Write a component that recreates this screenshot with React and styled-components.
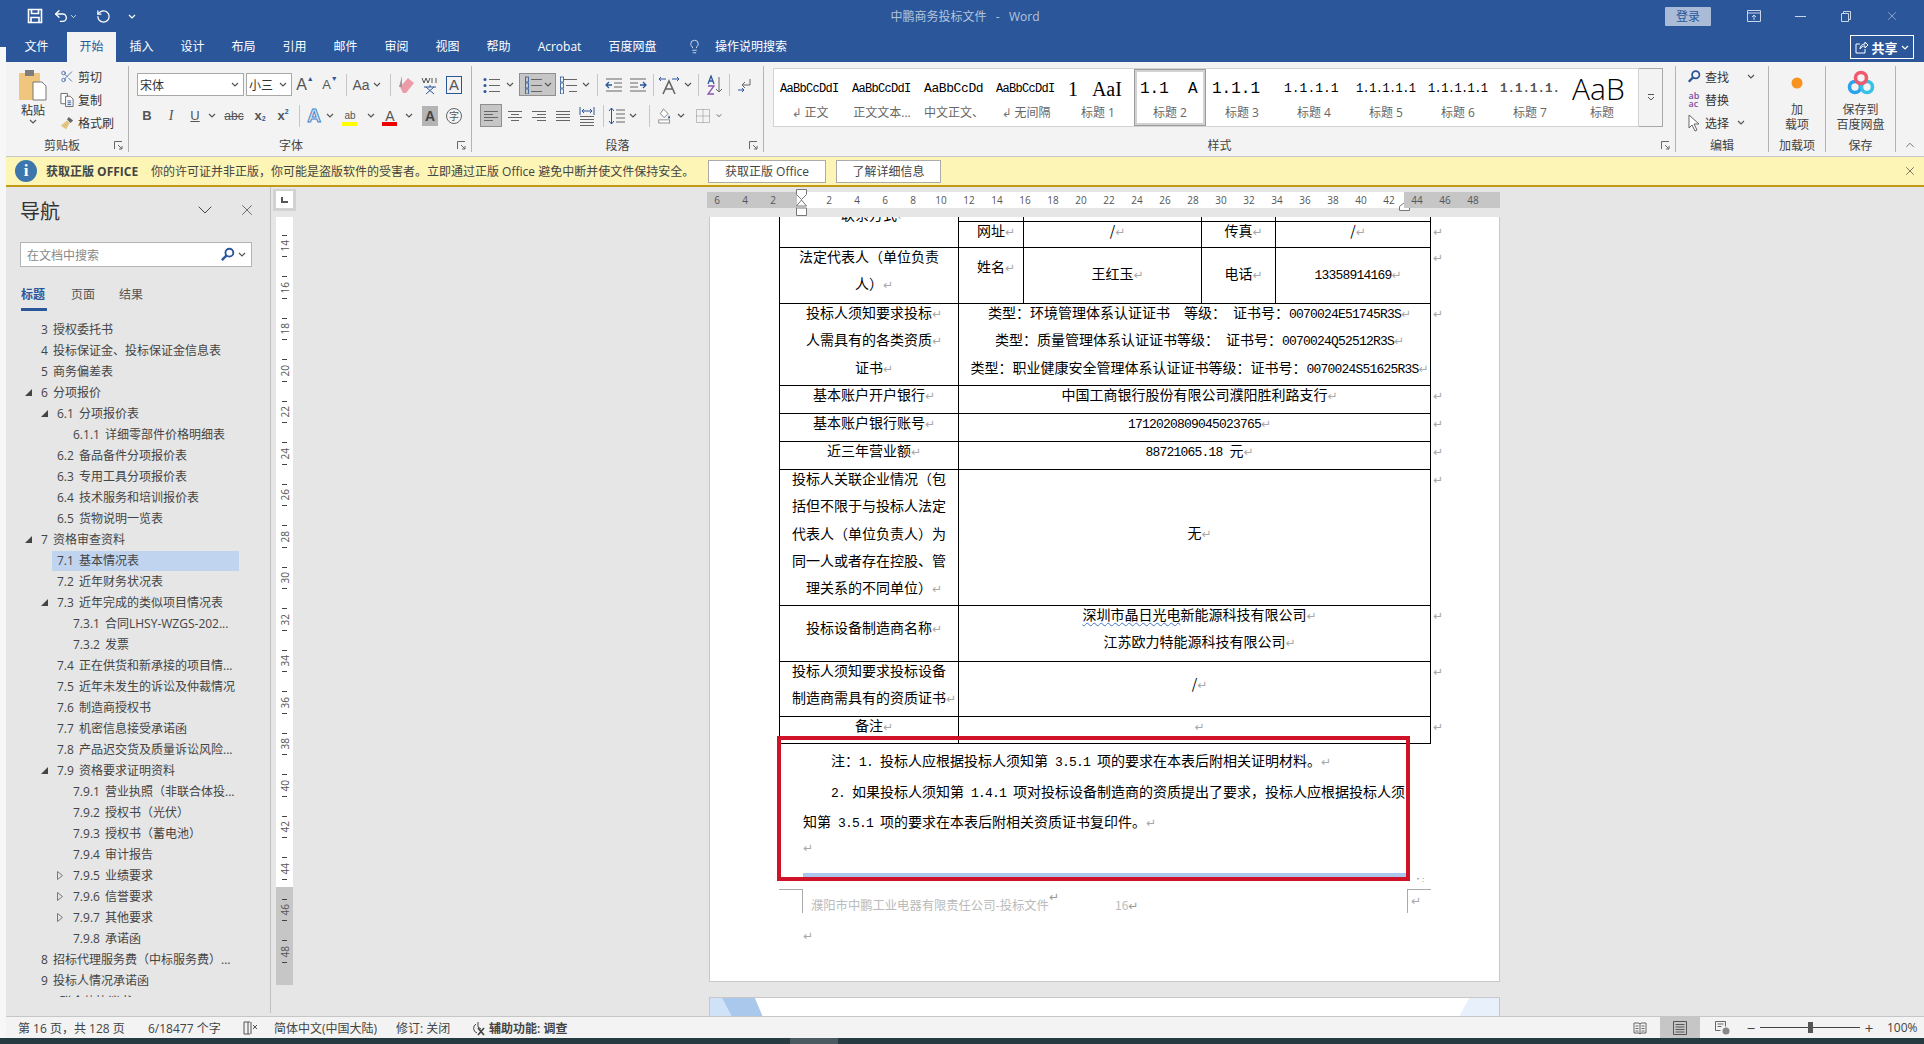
import React from "react";
import styled, { createGlobalStyle } from "styled-components";
import { Scissors, Undo2, RotateCcw, Lightbulb, X, ChevronDown, ChevronUp } from "lucide-react";

const UI_FONT = `"Open Sans", "Noto Sans CJK SC", sans-serif`;
const DOC_FONT = `"Noto Sans CJK SC", sans-serif`;
const BLUE = "#2b579a";

const Global = createGlobalStyle`
  html, body { margin: 0; padding: 0; background: #f7f7f7; overflow: hidden; }
  * { box-sizing: border-box; }
`;

const Screen = styled.div`
  width: 1924px;
  height: 1044px;
  display: flex;
  flex-direction: column;
  font-family: ${UI_FONT};
  font-size: 12px;
  color: #444;
  overflow: hidden;
`;
const Desktop = styled.div`
  flex: 1;
  display: flex;
  min-height: 0;
`;
const Strip = styled.div`
  width: 6px;
  background: linear-gradient(${BLUE} 47px, #f7f7f7 47px);
`;
const Win = styled.div`
  flex: 1;
  display: flex;
  flex-direction: column;
  min-width: 0;
`;

/* title bar */
const TitleRow = styled.div`
  height: 32px;
  background: ${BLUE};
  display: grid;
  grid-template-columns: 1fr auto 1fr;
  align-items: center;
  color: #fff;
`;
const Quick = styled.div`
  display: flex;
  align-items: center;
  padding-left: 20px;
`;
const QuickBtn = styled.div`
  width: ${(p) => p.$w}px;
  display: flex;
  justify-content: center;
  align-items: center;
`;
const TitleText = styled.div`
  color: #b4c4dc;
  font-size: 12px;
  white-space: pre;
`;
const WinControls = styled.div`
  display: flex;
  align-items: center;
  justify-content: flex-end;
  padding-right: 9px;
`;
const Login = styled.div`
  width: 46px;
  height: 19px;
  margin-right: 20px;
  background: #a9bbd6;
  color: ${BLUE};
  border-radius: 1px;
  display: flex;
  align-items: center;
  justify-content: center;
`;
const WinBtn = styled.div`
  width: 46px;
  display: flex;
  justify-content: center;
  align-items: center;
`;
const TabRow = styled.div`
  height: 30px;
  background: ${BLUE};
  display: flex;
  align-items: stretch;
`;
const Tab = styled.div`
  flex: none;
  width: ${(p) => (p.$w ? `${p.$w}px` : "auto")};
  padding: 0 13.5px 2px;
  display: flex;
  align-items: center;
  justify-content: center;
  white-space: nowrap;
  color: ${(p) => (p.$active ? BLUE : "#fff")};
  background: ${(p) => (p.$active ? "#f3f3f3" : "transparent")};
`;
const TellMe = styled.div`
  display: flex;
  align-items: center;
  gap: 13px;
  margin-left: 17px;
  padding-bottom: 2px;
  color: #fff;
`;
const Share = styled.div`
  margin: 3px 10px 3px auto;
  width: 64px;
  border: 1px solid #fff;
  color: #fff;
  font-weight: 700;
  font-size: 13px;
  display: flex;
  align-items: center;
  justify-content: center;
  gap: 3px;
`;

/* ribbon */
const Ribbon = styled.div`
  height: 95px;
  background: #f3f3f3;
  border-bottom: 1px solid #c6c6c6;
  display: flex;
  padding-top: 4px;
`;
const Group = styled.div`
  flex: none;
  width: ${(p) => p.$w}px;
  height: 86px;
  border-right: 1px solid #b4b4b4;
  display: flex;
  flex-direction: column;
`;
const GroupBody = styled.div`
  height: 72px;
  display: flex;
  padding: ${(p) => p.$pad || "0"};
`;
const ToolStack = styled.div`
  display: flex;
  flex-direction: column;
  gap: 8px;
  padding: 7px 0 0 ${(p) => p.$left}px;
`;
const LabelRow = styled.div`
  height: 14px;
  line-height: 16px;
  display: grid;
  grid-template-columns: 1fr auto 1fr;
  color: #444;
`;
const LabelText = styled.span`
  margin-right: ${(p) => p.$shift || 0}px;
`;
const Launcher = styled.svg`
  justify-self: end;
  margin: 3px 5px 0 0;
`;
const ToolRow = styled.div`
  display: flex;
  align-items: center;
  height: 23px;
`;
const Tool = styled.div`
  flex: none;
  width: ${(p) => p.$w}px;
  height: 23px;
  display: flex;
  align-items: center;
  justify-content: center;
  position: relative;
  white-space: nowrap;
  color: ${(p) => p.$color || "#555"};
  font-family: ${(p) => p.$serif ? `"Liberation Serif", serif` : `"Liberation Sans", sans-serif`};
  font-size: ${(p) => p.$size || 13}px;
  font-weight: ${(p) => (p.$bold ? 700 : 400)};
  font-style: ${(p) => (p.$italic ? "italic" : "normal")};
  text-decoration: ${(p) => p.$deco || "none"};
  background: ${(p) => (p.$on ? "#c6c6c6" : "transparent")};
  border: ${(p) => (p.$on ? "1px solid #8f8f8f" : "none")};
`;
const Sep = styled.div`
  flex: none;
  width: ${(p) => p.$w}px;
  height: 22px;
  display: flex;
  justify-content: center;
  &::after {
    content: "";
    width: 1px;
    background: #c6c6c6;
  }
`;
const Combo = styled.div`
  flex: none;
  width: ${(p) => p.$w}px;
  height: 23px;
  margin-right: ${(p) => p.$mr || 0}px;
  border: 1px solid #a8a8a8;
  background: #fff;
  padding: 0 4px 0 2px;
  display: flex;
  align-items: center;
  justify-content: space-between;
  color: #333;
  font-family: ${DOC_FONT};
`;
const ColorBar = styled.span`
  position: absolute;
  left: ${(p) => p.$left}px;
  bottom: 1px;
  width: 15px;
  height: 4px;
  background: ${(p) => p.$color};
`;
const Sup = styled.span`
  font-size: 7px;
  position: relative;
  top: ${(p) => p.$top}px;
  color: ${(p) => p.$color || "#555"};
`;
const PasteCol = styled.div`
  width: 54px;
  padding-top: 4px;
  display: flex;
  flex-direction: column;
  align-items: center;
  color: #333;
`;
const PasteLabel = styled.div`
  margin-top: 2px;
  line-height: 16px;
`;
const SideList = styled.div`
  display: flex;
  flex-direction: column;
  margin-top: -1px;
`;
const SideItem = styled.div`
  height: 23px;
  display: flex;
  align-items: center;
  gap: 4px;
  color: #333;
`;
const SideIcon = styled.div`
  width: 14px;
  display: flex;
  justify-content: center;
`;
const BigCol = styled.div`
  flex: 1;
  display: flex;
  flex-direction: column;
  align-items: center;
  text-align: center;
  line-height: 15px;
  color: #444;
`;
const BigIcon = styled.div`
  height: 34px;
  margin-bottom: 2px;
  display: flex;
  align-items: center;
  justify-content: center;
`;
const Gallery = styled.div`
  display: flex;
  height: 59px;
  border: 1px solid #d2d2d2;
  background: #fff;
`;
const StyleItem = styled.div`
  flex: none;
  width: 72px;
  height: 57px;
  box-shadow: ${(p) => (p.$on ? "inset 0 0 0 1px #9c9c9c, inset 0 0 0 3px #d2d2d2" : "none")};
`;
const StyleSample = styled.div`
  width: 60px;
  height: 32px;
  margin: 4px auto 0;
  overflow: hidden;
  white-space: pre;
  line-height: 32px;
  color: ${(p) => p.$color || "#000"};
  font-family: ${(p) => p.$font};
  font-size: ${(p) => p.$size}px;
  font-weight: ${(p) => p.$weight || 400};
  letter-spacing: ${(p) => p.$track || 0}px;
`;
const StyleName = styled.div`
  height: 16px;
  line-height: 16px;
  text-align: center;
  color: #666;
  white-space: nowrap;
`;
const GalleryScroll = styled.div`
  width: 24px;
  height: 59px;
  border: 1px solid #a8a8a8;
  border-left: none;
  display: flex;
  align-items: center;
  justify-content: center;
  background: #f3f3f3;
`;
const Collapse = styled.div`
  flex: 1;
  display: flex;
  align-items: flex-end;
  justify-content: center;
  height: 86px;
`;

/* licence warning */
const Warn = styled.div`
  height: 30px;
  background: #fcf5b6;
  border-bottom: 2px solid #bf9a17;
  display: flex;
  align-items: center;
  padding-left: 9px;
  color: #444;
  flex: none;
`;
const InfoDot = styled.div`
  width: 22px;
  height: 22px;
  border-radius: 50%;
  background: #3c76ad;
  color: #fff;
  font-family: "Liberation Serif", serif;
  font-weight: 700;
  font-size: 17px;
  display: flex;
  align-items: center;
  justify-content: center;
  margin-right: 9px;
`;
const WarnTitle = styled.b`
  width: 105px;
  flex: none;
  font-weight: 700;
`;
const WarnText = styled.div`
  width: 557px;
  flex: none;
  white-space: nowrap;
`;
const WarnBtn = styled.div`
  flex: none;
  width: ${(p) => p.$w}px;
  height: 23px;
  margin-right: 10px;
  background: #fff;
  border: 1px solid #ababab;
  display: flex;
  align-items: center;
  justify-content: center;
  color: #444;
`;
const WarnClose = styled.div`
  margin-left: auto;
  margin-right: 7px;
  display: flex;
  color: #444;
`;

/* main area */
const Main = styled.div`
  flex: 1;
  min-height: 0;
  display: flex;
  background: #e6e6e6;
`;
const Nav = styled.div`
  flex: none;
  width: 265px;
  height: 826px;
  border-right: 1px solid #c0c0c0;
  display: flex;
  flex-direction: column;
`;
const NavHead = styled.div`
  display: flex;
  align-items: center;
  height: 40px;
  padding: 6px 0 0 14px;
  color: #444;
`;
const NavTitle = styled.div`
  flex: 1;
  font-family: ${DOC_FONT};
  font-size: 20px;
  color: #333;
`;
const NavIcon = styled.div`
  width: 42px;
  display: flex;
  justify-content: center;
  color: #444;
  &:last-child {
    margin-right: 2px;
  }
`;
const NavSearch = styled.div`
  margin: 15px 0 0 14px;
  width: 232px;
  height: 25px;
  background: #fff;
  border: 1px solid #b4b4b4;
  display: flex;
  align-items: center;
  justify-content: space-between;
  padding: 0 5px 0 6px;
  color: #888;
`;
const SearchRight = styled.div`
  display: flex;
  align-items: center;
  gap: 3px;
`;
const NavTabs = styled.div`
  display: flex;
  gap: 24px;
  margin: 17px 0 0 15px;
`;
const NavTab = styled.div`
  width: ${(p) => (p.$on ? 26 : 24)}px;
  height: 27px;
  line-height: 22px;
  white-space: nowrap;
  color: ${(p) => (p.$on ? BLUE : "#555")};
  font-weight: ${(p) => (p.$on ? 600 : 400)};
  border-bottom: ${(p) => (p.$on ? `3px solid ${BLUE}` : "none")};
`;
const Tree = styled.div`
  margin-top: 8px;
  height: 678px;
  overflow: hidden;
`;
const TreeRow = styled.div`
  height: 21px;
  display: flex;
  align-items: center;
  padding: 0 31px 0 ${(p) => 16 + p.$level * 16}px;
  word-spacing: 2px;
  color: #444;
`;
const Twist = styled.div`
  flex: none;
  width: 19px;
  padding-left: 3px;
  display: flex;
`;
const TreeLabel = styled.div`
  flex: 1;
  height: 20px;
  line-height: 20px;
  margin-left: -5px;
  padding-left: 5px;
  white-space: nowrap;
  background: ${(p) => (p.$on ? "#c0d4f0" : "transparent")};
`;

/* rulers */
const VRulerCol = styled.div`
  flex: none;
  width: 26px;
  padding: 2px 0 0 2px;
`;
const TabStop = styled.div`
  width: 23px;
  height: 22px;
  background: #d2d2d2;
  padding: 2px 3px 3px;
`;
const TabInner = styled.div`
  height: 100%;
  background: #fff;
  display: flex;
  align-items: center;
  justify-content: center;
`;
const VTrack = styled.div`
  width: 17px;
  height: 768px;
  margin: 6px 0 0 3px;
  padding-top: 7.5px;
  background: linear-gradient(#fff 670px, #c6c6c6 670px);
`;
const VCell = styled.div`
  height: 41.5px;
  display: flex;
  flex-direction: column;
  align-items: center;
  justify-content: space-between;
  padding: 10px 0 9px;
  &::before, &::after {
    content: "";
    width: 5px;
    height: 1px;
    background: #444;
  }
`;
const VLabel = styled.div`
  writing-mode: vertical-rl;
  transform: rotate(180deg);
  font-size: 10px;
  line-height: 10px;
  color: #555;
`;
const Doc = styled.div`
  flex: 1;
  min-width: 0;
  padding: 5px 0 0 410px;
  overflow: hidden;
`;
const HRuler = styled.div`
  display: flex;
  height: 16px;
  width: 793px;
`;
const RulerPart = styled.div`
  position: relative;
  flex: none;
  width: ${(p) => p.$w}px;
  height: 16px;
  padding-left: ${(p) => p.$pad}px;
  display: flex;
  gap: 8px;
  background: ${(p) => (p.$white ? "#fff" : "#c6c6c6")};
`;
const RulerNum = styled.div`
  width: 20px;
  text-align: center;
  font-size: 10px;
  line-height: 16px;
  color: #555;
`;
const IndentMark = styled.svg`
  position: absolute;
  left: ${(p) => p.$left}px;
  top: ${(p) => p.$top}px;
`;

/* page */
const Page = styled.div`
  position: relative;
  margin: 9px 0 0 2px;
  width: 791px;
  height: 765px;
  background: #fff;
  border: 1px solid #c8c8c8;
  border-top: none;
  overflow: hidden;
  font-family: ${DOC_FONT};
  font-size: 14px;
  color: #000;
`;
const NextPage = styled.div`
  margin: 15px 0 0 2px;
  width: 791px;
  height: 19px;
  background: #fff;
  border: 1px solid #c8c8c8;
  border-bottom: none;
  display: flex;
`;
const Table = styled.table`
  margin: -22px 0 0 69px;
  border-collapse: collapse;
  table-layout: fixed;
  width: 666px;
`;
const Row = styled.tr`
  height: ${(p) => p.$h}px;
`;
const Cell = styled.td`
  border: 1px solid #000;
  padding: 0;
  vertical-align: top;
  text-align: center;
  white-space: nowrap;
  height: 0;
`;
const MarkCell = styled.td`
  padding: 0 0 0 2px;
  vertical-align: top;
`;
const Para = styled.div`
  margin-top: ${(p) => (p.$top || 0) - 5}px;
  line-height: 27.3px;
`;
const Num = styled.span`
  font-family: "Liberation Mono", monospace;
  font-size: 13px;
  letter-spacing: -0.8px;
  line-height: 0;
  white-space: pre;
`;
const Mk = styled.span`
  font-family: "DejaVu Sans", sans-serif;
  font-size: 12px;
  line-height: 0;
  color: ${(p) => p.$color || "#a8a8a8"};
`;
const EndMark = styled(Mk)`
  margin-right: -10px;
`;
const Squiggle = styled.span`
  text-decoration: underline wavy #4472c4 1px;
  text-underline-offset: 2px;
`;
const Notes = styled.div`
  margin: 1px 0 0 93px;
  white-space: nowrap;
`;
const NoteLine = styled.div`
  height: ${(p) => p.$h || 30.6}px;
  line-height: ${(p) => p.$h || 30.6}px;
  padding-left: ${(p) => (p.$indent ? 28 : 0)}px;
`;
const BlueBar = styled.div`
  margin: 18px 0 0 93px;
  width: 603px;
  height: 5px;
  background: #a9c8ec;
`;
const FooterRow = styled.div`
  margin: 11px 0 0 69px;
  width: 652px;
  height: 24px;
  display: flex;
  color: #bbb;
  font-size: 12.3px;
`;
const CropMark = styled.div`
  flex: none;
  width: 24px;
  border-top: 1px solid #aaa;
  border-right: ${(p) => (p.$right ? "none" : "1px solid #aaa")};
  border-left: ${(p) => (p.$right ? "1px solid #aaa" : "none")};
  padding: 10px 0 0 3px;
  line-height: 0;
`;
const FooterText = styled.div`
  flex: 1;
  display: flex;
  padding: 8px 0 0 8px;
  line-height: 16px;
  white-space: nowrap;
`;
const FooterPageNo = styled.div`
  margin-left: 56px;
  font-size: 12px;
`;
const LastMark = styled.div`
  margin: 12px 0 0 93px;
  height: 18px;
  line-height: 18px;
`;
const RedBox = styled.div`
  position: absolute;
  left: 67px;
  top: 519px;
  width: 633px;
  height: 145px;
  border: 4px solid #cf1228;
`;
const Specks = styled.span`
  position: absolute;
  left: 704px;
  top: 658px;
  font-size: 8px;
  line-height: 8px;
  color: #999;
`;

/* status bar */
const Status = styled.div`
  height: 22px;
  flex: none;
  background: #f3f3f3;
  border-top: 1px solid #c6c6c6;
  display: flex;
  align-items: center;
  padding-left: 12px;
  color: #444;
`;
const StatusItem = styled.div`
  flex: none;
  width: ${(p) => p.$w}px;
  white-space: nowrap;
  font-weight: ${(p) => (p.$bold ? 600 : 400)};
  display: flex;
  align-items: center;
  justify-content: ${(p) => (p.$center ? "center" : "flex-start")};
  padding-left: ${(p) => p.$pad || 0}px;
`;
const ViewBtn = styled.div`
  flex: none;
  width: ${(p) => p.$w}px;
  height: 21px;
  display: flex;
  align-items: center;
  justify-content: center;
  background: ${(p) => (p.$on ? "#c6c6c6" : "transparent")};
`;
const Slider = styled.div`
  flex: none;
  width: 100px;
  height: 1px;
  margin: 0 2px;
  background: #444;
  display: flex;
  align-items: center;
  padding-left: 48px;
  &::after {
    content: "";
    width: 5px;
    height: 11px;
    background: #555;
  }
`;
const ZoomSign = styled.div`
  flex: none;
  width: 14px;
  text-align: center;
  font-size: 15px;
  color: #444;
`;
const Taskbar = styled.div`
  height: 6px;
  flex: none;
  background: #263a42;
  padding-left: 790px;
  &::after {
    content: "";
    display: block;
    width: 48px;
    height: 6px;
    background: #4b5a60;
  }
`;
const Boxed = styled.span`
  width: 16px;
  height: 18px;
  border: 1px solid ${BLUE};
  display: flex;
  align-items: center;
  justify-content: center;
`;
const Outlined = styled.span`
  color: #dce8f6;
  -webkit-text-stroke: 1px #4a86c8;
`;
const Shaded = styled.span`
  background: #b4b4b4;
  padding: 2px 3px;
  color: #444;
`;
const Ringed = styled.span`
  width: 16px;
  height: 16px;
  border: 1px solid #666;
  border-radius: 50%;
  display: flex;
  align-items: center;
  justify-content: center;
  font-family: ${DOC_FONT};
`;
const Gap = styled.span`
  margin-left: ${(p) => p.$w}px;
  display: flex;
`;
const ReplaceGlyph = styled.span`
  font-size: 9px;
  line-height: 8px;
  font-weight: 600;
  color: #7a4fa3;
`;

/* small drawings */
const Chev = ({ c = "#555" }) => (
  <svg width="8" height="5" viewBox="0 0 8 5" fill="none" stroke={c} strokeWidth="1.2">
    <path d="M1 1l3 3 3-3" />
  </svg>
);
const Corner = () => (
  <Launcher width="9" height="9" viewBox="0 0 9 9" fill="none" stroke="#666">
    <path d="M.5 8V.5H8M4 4l4 4M5 8h3V5" />
  </Launcher>
);
const Lines = ({ ys, x1 = 1, x2 = 15, w = 16, h = 16, c = "#666" }) => (
  <svg width={w} height={h} viewBox={`0 0 ${w} ${h}`} stroke={c}>
    {ys.map((y, i) => {
      const [a, b] = Array.isArray(x1) ? [x1[i], x2[i]] : [x1, x2];
      return <line key={i} x1={a} x2={b} y1={y + 0.5} y2={y + 0.5} />;
    })}
  </svg>
);
const ListIcon = ({ kind }) => (
  <svg width="20" height="18" viewBox="0 0 20 18" stroke="#666">
    {[3, 9, 15].map((y, i) => (
      <line key={y} x1={kind === "multi" ? 4 + i * 3 : 7} x2="18" y1={y + 0.5} y2={y + 0.5} />
    ))}
    {[3, 9, 15].map((y) =>
      kind === "bullet" ? (
        <circle key={y} cx="3" cy={y + 0.5} r="1.5" fill={BLUE} stroke="none" />
      ) : (
        <rect key={y} x="1.5" y={y - 2} width="3" height="5" fill="none" stroke={BLUE} strokeWidth=".8" />
      )
    )}
  </svg>
);
const IndentIcon = ({ flip }) => (
  <svg width="18" height="16" viewBox="0 0 18 16" style={{ transform: flip ? "scaleX(-1)" : "none" }}>
    <path d="M1 2h16M9 6h8M9 10h8M1 14h16" stroke="#666" />
    <path d="M7 8H1M4 5L1 8l3 3" stroke={BLUE} fill="none" strokeWidth="1.3" />
  </svg>
);
const SaveIcon = () => (
  <svg width="16" height="16" viewBox="0 0 16 16" fill="none" stroke="#fff" strokeWidth="1.6">
    <path d="M1.5 1.5h13v13h-13zM4.5 1.5v4h7v-4M4 14.5v-5h8v5" />
  </svg>
);
const PasteIcon = () => (
  <svg width="28" height="31" viewBox="0 0 28 31">
    <rect x="0" y="3" width="21" height="27" rx="1" fill="#f0c67e" />
    <rect x="6" y="0" width="9" height="6" fill="#7d7d7d" />
    <path d="M14 12h9l4 4v14H14z" fill="#fff" stroke="#777" />
  </svg>
);
const CopyIcon = () => (
  <svg width="15" height="16" viewBox="0 0 15 16" fill="#fff" stroke="#666">
    <path d="M1 1h7v11H1z" />
    <path d="M6 4h5l3 3v8H6z" />
    <path d="M8 9h4M8 11h4M8 13h4" stroke={BLUE} />
  </svg>
);
const BrushIcon = () => (
  <svg width="16" height="16" viewBox="0 0 16 16">
    <path d="M10 1l5 4-3 3-4-4z" fill="#666" />
    <path d="M8 5l3 3-4 7-6-4z" fill="#e3c27c" />
  </svg>
);
const EraserIcon = () => (
  <svg width="18" height="20" viewBox="0 0 18 20">
    <path d="M2 12L10 3l6 5-8 10H5z" fill="#ec9ca9" />
    <path d="M4 1L1 12h3z" fill="#9a9a9a" />
  </svg>
);
const SearchIcon = ({ s = 16 }) => (
  <svg width={s} height={s} viewBox="0 0 16 16" fill="none" stroke={BLUE} strokeWidth="2">
    <circle cx="10" cy="6" r="4.2" />
    <path d="M7 9l-5 5" strokeWidth="2.6" />
  </svg>
);
const CursorIcon = () => (
  <svg width="12" height="18" viewBox="0 0 12 18" fill="#fff" stroke="#666">
    <path d="M1 1v13l3-3 3 6 2-1-3-6h5z" />
  </svg>
);
const BaiduIcon = () => (
  <svg width="28" height="26" viewBox="0 0 28 26" fill="none" strokeWidth="3.6">
    <circle cx="8" cy="17" r="5.5" stroke="#2aa2ef" />
    <circle cx="20" cy="17" r="5.5" stroke="#38c1e6" />
    <circle cx="14" cy="8" r="5.5" stroke="#ef5a6f" />
  </svg>
);
const PaintIcon = () => (
  <svg width="18" height="20" viewBox="0 0 18 20">
    <path d="M7 1l6 6-5 5-5-5z" fill="#fff" stroke="#666" />
    <path d="M14 9c1.5 2 2 3 1 4s-2 0-2-1z" fill={BLUE} />
    <rect x="1" y="15" width="14" height="4" fill="#fff" stroke="#777" />
  </svg>
);
const LineSpacing = () => (
  <svg width="18" height="18" viewBox="0 0 18 18" fill="none">
    <path d="M8 3h9M8 7h9M8 11h9M8 15h9" stroke="#666" />
    <path d="M3.5 1v16M1 4l2.5-3L6 4M1 14l2.5 3L6 14" stroke={BLUE} />
  </svg>
);
const Distribute = () => (
  <svg width="16" height="20" viewBox="0 0 16 20" fill="none">
    <path d="M1 1v8M15 1v8M3 5h10M5 3L3 5l2 2M11 3l2 2-2 2" stroke={BLUE} />
    <path d="M1 10.5h14M1 13.5h14M1 16.5h14M1 19.5h14" stroke="#666" />
  </svg>
);
const SortAZ = () => (
  <svg width="18" height="20" viewBox="0 0 18 20" fill="none">
    <path d="M2 9l3-8 3 8M3 6h4" stroke={BLUE} strokeWidth="1.3" />
    <path d="M2 11h6L2 19h6" stroke="#8a55b0" strokeWidth="1.3" />
    <path d="M13 2v15M10 14l3 3 3-3" stroke="#666" />
  </svg>
);
const ShowMarks = () => (
  <svg width="16" height="16" viewBox="0 0 16 16" fill="none" stroke="#666">
    <path d="M13 2v6H5M8 5L5 8l3 3" />
    <path d="M1 13h6M5 11l2 2-2 2" stroke={BLUE} />
  </svg>
);
const AsianLayout = () => (
  <svg width="22" height="20" viewBox="0 0 22 20" fill="none">
    <path d="M5 19l6-13 6 13M7.5 14h7" stroke="#666" strokeWidth="1.6" />
    <path d="M1 4h7M3 2L1 4l2 2M14 4h7M19 2l2 2-2 2" stroke={BLUE} />
  </svg>
);
const BorderIcon = () => (
  <svg width="14" height="14" viewBox="0 0 14 14" fill="none" stroke="#888" strokeDasharray="1 1">
    <path d="M.5.5h13v13H.5zM7 .5v13M.5 7h13" />
  </svg>
);
const Triangle = ({ open }) =>
  open ? (
    <svg width="7" height="7" viewBox="0 0 7 7">
      <path d="M0 7h7V0z" fill="#444" />
    </svg>
  ) : (
    <svg width="6" height="9" viewBox="0 0 6 9" fill="none" stroke="#777">
      <path d="M.5.5l5 4-5 4z" />
    </svg>
  );
const BookIcon = () => (
  <svg width="16" height="14" viewBox="0 0 16 14" fill="none" stroke="#555">
    <path d="M1 1h4v12H1zM5 1h2M5 13h2M8 1v12" />
    <path d="M10 4l4 4M14 4l-4 4" />
  </svg>
);
const AccessIcon = () => (
  <svg width="14" height="16" viewBox="0 0 14 16" fill="none" stroke="#444">
    <path d="M4 4a5 5 0 0 0 1 9" />
    <path d="M6 2v5l3 2" />
    <path d="M6 8l6 7M12 8l-6 7" strokeWidth="1.7" />
  </svg>
);
const ReadIcon = () => (
  <svg width="14" height="14" viewBox="0 0 14 14" fill="none" stroke="#666">
    <path d="M1 2h5l1 1 1-1h5v10H8l-1 1-1-1H1zM7 3v10M2.5 5h3M2.5 7.5h3M2.5 10h3M8.5 5h3M8.5 7.5h3M8.5 10h3" />
  </svg>
);
const PrintIcon = () => (
  <svg width="14" height="14" viewBox="0 0 14 14" fill="none" stroke="#555">
    <path d="M.5.5h13v13H.5zM2.5 3.5h9M2.5 6h9M2.5 8.5h9M2.5 11h9" />
  </svg>
);
const WebIcon = () => (
  <svg width="15" height="14" viewBox="0 0 15 14" fill="none" stroke="#666">
    <path d="M.5.5h10v5M.5.5v9h5M2.5 3h6M2.5 5.5h4" />
    <circle cx="11" cy="10" r="3.5" fill="#888" stroke="none" />
  </svg>
);

const MONO = "mono";
const STYLES = [
  { s: "AaBbCcDdI", f: MONO, z: 12, t: -0.7, n: <><Mk $color="#777">↲</Mk> 正文</> },
  { s: "AaBbCcDdI", f: MONO, z: 12, t: -0.7, n: "正文文本..." },
  { s: "AaBbCcDd", f: MONO, z: 13, t: -0.4, n: "中文正文、" },
  { s: "AaBbCcDdI", f: MONO, z: 12, t: -0.7, n: <><Mk $color="#777">↲</Mk> 无间隔</> },
  { s: "1   AaI", f: "serif", z: 20, n: "标题 1" },
  { s: "1.1  A", f: MONO, z: 16, n: "标题 2", on: true },
  { s: "1.1.1", f: MONO, z: 16, n: "标题 3" },
  { s: "1.1.1.1", f: MONO, z: 13, n: "标题 4" },
  { s: "1.1.1.1.1", f: MONO, z: 12, t: -0.6, n: "标题 5" },
  { s: "1.1.1.1.1", f: MONO, z: 12, t: -0.6, n: "标题 6" },
  { s: "1.1.1.1.", f: MONO, z: 12.5, n: "标题 7", c: "#555", b: 700 },
  { s: "AaB", f: "sans", z: 30, n: "标题", b: 300 },
];
const FONT_MAP = {
  mono: `"Liberation Mono", monospace`,
  serif: `"Liberation Serif", serif`,
  sans: `"Open Sans", sans-serif`,
};

const TREE = [
  ["3 授权委托书", 0],
  ["4 投标保证金、投标保证金信息表", 0],
  ["5 商务偏差表", 0],
  ["6 分项报价", 0, "open"],
  ["6.1 分项报价表", 1, "open"],
  ["6.1.1 详细零部件价格明细表", 2],
  ["6.2 备品备件分项报价表", 1],
  ["6.3 专用工具分项报价表", 1],
  ["6.4 技术服务和培训报价表", 1],
  ["6.5 货物说明一览表", 1],
  ["7 资格审查资料", 0, "open"],
  ["7.1 基本情况表", 1, null, true],
  ["7.2 近年财务状况表", 1],
  ["7.3 近年完成的类似项目情况表", 1, "open"],
  ["7.3.1 合同LHSY-WZGS-202...", 2],
  ["7.3.2 发票", 2],
  ["7.4 正在供货和新承接的项目情...", 1],
  ["7.5 近年未发生的诉讼及仲裁情况", 1],
  ["7.6 制造商授权书", 1],
  ["7.7 机密信息接受承诺函", 1],
  ["7.8 产品迟交货及质量诉讼风险...", 1],
  ["7.9 资格要求证明资料", 1, "open"],
  ["7.9.1 营业执照（非联合体投...", 2],
  ["7.9.2 授权书（光伏）", 2],
  ["7.9.3 授权书（蓄电池）", 2],
  ["7.9.4 审计报告", 2],
  ["7.9.5 业绩要求", 2, "closed"],
  ["7.9.6 信誉要求", 2, "closed"],
  ["7.9.7 其他要求", 2, "closed"],
  ["7.9.8 承诺函", 2],
  ["8 招标代理服务费（中标服务费）...", 0],
  ["9 投标人情况承诺函", 0],
  ["10 联合体协议书", 0],
];

const VNUMS = [14, 16, 18, 20, 22, 24, 26, 28, 30, 32, 34, 36, 38, 40, 42, 44, 46, 48];
const HNUMS = [];
for (let i = 2; i <= 42; i += 2) HNUMS.push(i);

const R = () => <EndMark>↵</EndMark>;

const TitleBar = () => (
  <>
    <TitleRow>
      <Quick>
        <QuickBtn $w={18}><SaveIcon /></QuickBtn>
        <QuickBtn $w={42}><Undo2 size={16} strokeWidth={2} /><ChevronDown size={9} /></QuickBtn>
        <QuickBtn $w={34}><RotateCcw size={15} strokeWidth={2} /></QuickBtn>
        <QuickBtn $w={24}><Chev c="#fff" /></QuickBtn>
      </Quick>
      <TitleText>中鹏商务投标文件   -   Word</TitleText>
      <WinControls>
        <Login>登录</Login>
        <WinBtn>
          <svg width="14" height="12" viewBox="0 0 14 12" fill="none" stroke="#c9d5e8">
            <path d="M.5.5h13v11H.5zM.5 3h13M7 10V5M5 7l2-2 2 2" />
          </svg>
        </WinBtn>
        <WinBtn>
          <svg width="11" height="1"><rect width="11" height="1" fill="#c9d5e8" /></svg>
        </WinBtn>
        <WinBtn>
          <svg width="10" height="11" viewBox="0 0 10 11" fill="none" stroke="#c9d5e8">
            <path d="M.5 2.5h7v8h-7zM2.5 2.5v-2h7v8h-2" />
          </svg>
        </WinBtn>
        <WinBtn><X size={14} strokeWidth={1} color="#c9d5e8" /></WinBtn>
      </WinControls>
    </TitleRow>
    <TabRow>
      <Tab $w={61}>文件</Tab>
      <Tab $w={49} $active>开始</Tab>
      {["插入", "设计", "布局", "引用", "邮件", "审阅", "视图", "帮助", "Acrobat", "百度网盘"].map((t) => (
        <Tab key={t}>{t}</Tab>
      ))}
      <TellMe>
        <Lightbulb size={15} strokeWidth={1.2} />
        操作说明搜索
      </TellMe>
      <Share>
        <svg width="13" height="14" viewBox="0 0 13 14" fill="none" stroke="#fff">
          <path d="M5 4H1v9h9V9M5 9c0-3 2-5 5-5V2l3 3-3 3V6C8 6 6 7 5 9z" />
        </svg>
        共享
        <Chev c="#fff" />
      </Share>
    </TabRow>
  </>
);

const ClipboardGroup = () => (
  <Group $w={123}>
    <GroupBody>
      <PasteCol>
        <PasteIcon />
        <PasteLabel>粘贴</PasteLabel>
        <Chev />
      </PasteCol>
      <SideList>
        <SideItem><SideIcon><Scissors size={15} color={BLUE} strokeWidth={1.3} /></SideIcon>剪切</SideItem>
        <SideItem><SideIcon><CopyIcon /></SideIcon>复制</SideItem>
        <SideItem><SideIcon><BrushIcon /></SideIcon>格式刷</SideItem>
      </SideList>
    </GroupBody>
    <LabelRow><span /><LabelText $shift={10}>剪贴板</LabelText><Corner /></LabelRow>
  </Group>
);

const FontGroup = () => (
  <Group $w={343}>
    <GroupBody>
      <ToolStack $left={8}>
        <ToolRow>
          <Combo $w={107} $mr={2}>宋体<Chev /></Combo>
          <Combo $w={46}>小三<Chev /></Combo>
          <Tool $w={26} $size={16}>A<Sup $top={-6} $color={BLUE}>▲</Sup></Tool>
          <Tool $w={24} $size={13}>A<Sup $top={-6} $color={BLUE}>▼</Sup></Tool>
          <Sep $w={8} />
          <Tool $w={22} $size={14}>Aa</Tool>
          <Tool $w={10}><Chev /></Tool>
          <Sep $w={16} />
          <Tool $w={18}><EraserIcon /></Tool>
          <Tool $w={28} $size={9}>
            <svg width="20" height="20" viewBox="0 0 20 20" fill="none" stroke={BLUE}>
              <path d="M4 12h12M10 10v2M6 19l8-7M6 12l8 7" />
              <path d="M2 3l2 5 2-5 2 5 2-5M12 8V3M16 8V3" stroke="#555" />
            </svg>
          </Tool>
          <Tool $w={20} $size={15}><Boxed>A</Boxed></Tool>
        </ToolRow>
        <ToolRow>
          <Tool $w={20} $bold>B</Tool>
          <Tool $w={28} $italic $serif $size={14}>I</Tool>
          <Tool $w={20} $deco="underline">U</Tool>
          <Tool $w={14}><Chev /></Tool>
          <Tool $w={30} $size={12} $deco="line-through">abc</Tool>
          <Tool $w={22} $bold>x<Sup $top={3} $color={BLUE}>2</Sup></Tool>
          <Tool $w={24} $bold>x<Sup $top={-4} $color={BLUE}>2</Sup></Tool>
          <Sep $w={8} />
          <Tool $w={22} $size={19} $bold><Outlined>A</Outlined></Tool>
          <Tool $w={10}><Chev /></Tool>
          <Tool $w={30} $size={10}>ab<ColorBar $left={7} $color="#ffff00" /></Tool>
          <Tool $w={12}><Chev /></Tool>
          <Tool $w={26} $size={14}>A<ColorBar $left={5} $color="#ee0000" /></Tool>
          <Tool $w={12}><Chev /></Tool>
          <Tool $w={30} $size={14} $bold><Shaded>A</Shaded></Tool>
          <Tool $w={18} $size={10}><Ringed>字</Ringed></Tool>
        </ToolRow>
      </ToolStack>
    </GroupBody>
    <LabelRow><span /><LabelText $shift={18}>字体</LabelText><Corner /></LabelRow>
  </Group>
);

const ParagraphGroup = () => (
  <Group $w={292}>
    <GroupBody>
      <ToolStack $left={8}>
        <ToolRow>
          <Tool $w={24}><ListIcon kind="bullet" /></Tool>
          <Tool $w={12}><Chev /></Tool>
          <Tool $w={3} />
          <Tool $w={37} $on><ListIcon kind="num" /><Chev /></Tool>
          <Tool $w={26}><ListIcon kind="multi" /></Tool>
          <Tool $w={8}><Chev /></Tool>
          <Sep $w={14} />
          <Tool $w={20}><IndentIcon /></Tool>
          <Tool $w={28}><IndentIcon flip /></Tool>
          <Sep $w={2} />
          <Tool $w={30}><AsianLayout /></Tool>
          <Tool $w={8}><Chev /></Tool>
          <Sep $w={12} />
          <Tool $w={22}><SortAZ /></Tool>
          <Sep $w={6} />
          <Tool $w={26}><ShowMarks /></Tool>
        </ToolRow>
        <ToolRow>
          <Tool $w={22} $on><Lines ys={[3, 6, 9, 12]} x2={[15, 10, 15, 10]} x1={[1, 1, 1, 1]} /></Tool>
          <Tool $w={26}><Lines ys={[3, 6, 9, 12]} x1={[1, 4, 1, 4]} x2={[15, 12, 15, 12]} /></Tool>
          <Tool $w={22}><Lines ys={[3, 6, 9, 12]} x1={[1, 6, 1, 6]} x2={[15, 15, 15, 15]} /></Tool>
          <Tool $w={26}><Lines ys={[3, 6, 9, 12]} /></Tool>
          <Tool $w={22}><Distribute /></Tool>
          <Sep $w={10} />
          <Tool $w={18}><LineSpacing /></Tool>
          <Tool $w={14}><Chev /></Tool>
          <Sep $w={18} />
          <Tool $w={14}><PaintIcon /></Tool>
          <Tool $w={18}><Chev /></Tool>
          <Tool $w={26}><BorderIcon /></Tool>
          <Tool $w={6}><Chev /></Tool>
        </ToolRow>
      </ToolStack>
    </GroupBody>
    <LabelRow><span /><span>段落</span><Corner /></LabelRow>
  </Group>
);

const StylesGroup = () => (
  <Group $w={912}>
    <GroupBody $pad="2px 0 0 9px">
      <Gallery>
        {STYLES.map((it, i) => (
          <StyleItem key={i} $on={it.on}>
            <StyleSample $font={FONT_MAP[it.f]} $size={it.z} $color={it.c} $weight={it.b} $track={it.t}>{it.s}</StyleSample>
            <StyleName>{it.n}</StyleName>
          </StyleItem>
        ))}
      </Gallery>
      <GalleryScroll>
        <svg width="8" height="8" viewBox="0 0 8 8" fill="none" stroke="#555">
          <path d="M1 .5h6M1 3l3 3 3-3" />
        </svg>
      </GalleryScroll>
    </GroupBody>
    <LabelRow><span /><span>样式</span><Corner /></LabelRow>
  </Group>
);

const EditGroup = () => (
  <Group $w={93}>
    <GroupBody $pad="0 0 0 11px">
      <SideList>
        <SideItem>
          <SideIcon><SearchIcon s={15} /></SideIcon>查找
          <Gap $w={14}><Chev /></Gap>
        </SideItem>
        <SideItem>
          <SideIcon><ReplaceGlyph>ab<br />ac</ReplaceGlyph></SideIcon>替换
        </SideItem>
        <SideItem>
          <SideIcon><CursorIcon /></SideIcon>选择
          <Gap $w={4}><Chev /></Gap>
        </SideItem>
      </SideList>
    </GroupBody>
    <LabelRow><span /><span>编辑</span><span /></LabelRow>
  </Group>
);

const AddinGroup = () => (
  <Group $w={57}>
    <GroupBody>
      <BigCol>
        <BigIcon>
          <svg width="12" height="12"><circle cx="6" cy="6" r="5.5" fill="#f8931f" /></svg>
        </BigIcon>
        加<br />载项
      </BigCol>
    </GroupBody>
    <LabelRow><span /><span>加载项</span><span /></LabelRow>
  </Group>
);
const SaveGroup = () => (
  <Group $w={70}>
    <GroupBody>
      <BigCol>
        <BigIcon><BaiduIcon /></BigIcon>
        保存到<br />百度网盘
      </BigCol>
    </GroupBody>
    <LabelRow><span /><span>保存</span><span /></LabelRow>
  </Group>
);

const NavPane = () => (
  <Nav>
    <NavHead>
      <NavTitle>导航</NavTitle>
      <NavIcon><ChevronDown size={24} strokeWidth={1} /></NavIcon>
      <NavIcon><X size={18} strokeWidth={1} /></NavIcon>
    </NavHead>
    <NavSearch>
      在文档中搜索
      <SearchRight><SearchIcon s={15} /><Chev /></SearchRight>
    </NavSearch>
    <NavTabs>
      <NavTab $on>标题</NavTab>
      <NavTab>页面</NavTab>
      <NavTab>结果</NavTab>
    </NavTabs>
    <Tree>
      {TREE.map(([label, level, twist, on]) => (
        <TreeRow key={label} $level={level}>
          <Twist>{twist && <Triangle open={twist === "open"} />}</Twist>
          <TreeLabel $on={on}>{label}</TreeLabel>
        </TreeRow>
      ))}
    </Tree>
  </Nav>
);

const VRuler = () => (
  <VRulerCol>
    <TabStop>
      <TabInner>
        <svg width="7" height="6" viewBox="0 0 7 6"><path d="M0 0h2v4h5v2H0z" fill="#555" /></svg>
      </TabInner>
    </TabStop>
    <VTrack>
      {VNUMS.map((n) => (
        <VCell key={n}><VLabel>{n}</VLabel></VCell>
      ))}
    </VTrack>
  </VRulerCol>
);

const Ruler = () => (
  <HRuler>
    <RulerPart $w={90} $pad={0}>
      {[6, 4, 2].map((n) => <RulerNum key={n}>{n}</RulerNum>)}
    </RulerPart>
    <RulerPart $w={607} $pad={22} $white>
      {HNUMS.map((n) => <RulerNum key={n}>{n}</RulerNum>)}
      <IndentMark $left={-1} $top={-3} width="11" height="27" viewBox="0 0 11 27" fill="#fff" stroke="#777">
        <path d="M.5.5h10v5l-5 5-5-5z" />
        <path d="M5.5 11l5 6H.5z" />
        <path d="M.5 19h10v7.5H.5z" />
      </IndentMark>
      <IndentMark $left={602} $top={10} width="11" height="9" viewBox="0 0 11 9" fill="#fff" stroke="#777">
        <path d="M5.5.5l5 4v4H.5v-4z" />
      </IndentMark>
    </RulerPart>
    <RulerPart $w={96} $pad={3}>
      {[44, 46, 48].map((n) => <RulerNum key={n}>{n}</RulerNum>)}
    </RulerPart>
  </HRuler>
);

const InfoTable = () => (
  <Table>
    <colgroup>
      <col width="179" />
      <col width="65" />
      <col width="178" />
      <col width="74" />
      <col width="155" />
      <col width="15" />
    </colgroup>
    <tbody>
      <Row $h={26}>
        <Cell rowSpan={2}><Para $top={10}>联系方式<R /></Para></Cell>
        <Cell /><Cell /><Cell /><Cell />
        <MarkCell />
      </Row>
      <Row $h={26}>
        <Cell><Para>网址<R /></Para></Cell>
        <Cell><Para>/<R /></Para></Cell>
        <Cell><Para>传真<R /></Para></Cell>
        <Cell><Para>/<R /></Para></Cell>
        <MarkCell><Para><R /></Para></MarkCell>
      </Row>
      <Row $h={56}>
        <Cell><Para>法定代表人（单位负责<br />人）<R /></Para></Cell>
        <Cell><Para $top={10}>姓名<R /></Para></Cell>
        <Cell><Para $top={17}>王红玉<R /></Para></Cell>
        <Cell><Para $top={17}>电话<R /></Para></Cell>
        <Cell><Para $top={17}><Num>13358914169</Num><R /></Para></Cell>
        <MarkCell><Para><R /></Para></MarkCell>
      </Row>
      <Row $h={82}>
        <Cell><Para>投标人须知要求投标<R /><br />人需具有的各类资质<R /><br />证书<R /></Para></Cell>
        <Cell colSpan={4}>
          <Para>
            类型：环境管理体系认证证书<Num>  </Num>等级：<Num> </Num>证书号：<Num>0070024E51745R3S</Num><R /><br />
            类型：质量管理体系认证证书等级：<Num> </Num>证书号：<Num>0070024Q52512R3S</Num><R /><br />
            类型：职业健康安全管理体系认证证书等级：证书号：<Num>0070024S51625R3S</Num><R />
          </Para>
        </Cell>
        <MarkCell><Para><R /></Para></MarkCell>
      </Row>
      <Row $h={28}>
        <Cell><Para>基本账户开户银行<R /></Para></Cell>
        <Cell colSpan={4}><Para>中国工商银行股份有限公司濮阳胜利路支行<R /></Para></Cell>
        <MarkCell><Para><R /></Para></MarkCell>
      </Row>
      <Row $h={28}>
        <Cell><Para>基本账户银行账号<R /></Para></Cell>
        <Cell colSpan={4}><Para><Num>1712020809045023765</Num><R /></Para></Cell>
        <MarkCell><Para><R /></Para></MarkCell>
      </Row>
      <Row $h={28}>
        <Cell><Para>近三年营业额<R /></Para></Cell>
        <Cell colSpan={4}><Para><Num>88721065.18 </Num>元<R /></Para></Cell>
        <MarkCell><Para><R /></Para></MarkCell>
      </Row>
      <Row $h={136}>
        <Cell>
          <Para>
            投标人关联企业情况（包<br />括但不限于与投标人法定<br />代表人（单位负责人）为<br />
            同一人或者存在控股、管<br />理关系的不同单位）<R />
          </Para>
        </Cell>
        <Cell colSpan={4}><Para $top={54}>无<R /></Para></Cell>
        <MarkCell><Para><R /></Para></MarkCell>
      </Row>
      <Row $h={56}>
        <Cell><Para $top={13}>投标设备制造商名称<R /></Para></Cell>
        <Cell colSpan={4}>
          <Para><Squiggle>深圳市晶日光电</Squiggle>新能源科技有限公司<R /><br />江苏欧力特能源科技有限公司<R /></Para>
        </Cell>
        <MarkCell><Para><R /></Para></MarkCell>
      </Row>
      <Row $h={55}>
        <Cell><Para>投标人须知要求投标设备<br />制造商需具有的资质证书<R /></Para></Cell>
        <Cell colSpan={4}><Para $top={13}>/<R /></Para></Cell>
        <MarkCell><Para><R /></Para></MarkCell>
      </Row>
      <Row $h={27}>
        <Cell><Para>备注<R /></Para></Cell>
        <Cell colSpan={4}><Para><R /></Para></Cell>
        <MarkCell><Para><R /></Para></MarkCell>
      </Row>
    </tbody>
  </Table>
);

const DocPage = () => (
  <Page>
    <InfoTable />
    <Notes>
      <NoteLine $indent>注：<Num>1. </Num>投标人应根据投标人须知第<Num> 3.5.1 </Num>项的要求在本表后附相关证明材料。<R /></NoteLine>
      <NoteLine $indent><Num>2. </Num>如果投标人须知第<Num> 1.4.1 </Num>项对投标设备制造商的资质提出了要求，投标人应根据投标人须</NoteLine>
      <NoteLine>知第<Num> 3.5.1 </Num>项的要求在本表后附相关资质证书复印件。<R /></NoteLine>
      <NoteLine $h={18}><R /></NoteLine>
    </Notes>
    <BlueBar />
    <FooterRow>
      <CropMark />
      <FooterText>
        濮阳市中鹏工业电器有限责任公司-投标文件<Mk $color="#999">↵</Mk>
        <FooterPageNo>16<Mk $color="#999">↵</Mk></FooterPageNo>
      </FooterText>
      <CropMark $right><R /></CropMark>
    </FooterRow>
    <LastMark><R /></LastMark>
    <RedBox />
    <Specks>·:</Specks>
  </Page>
);

const StatusBar = () => (
  <Status>
    <StatusItem $w={130}>第 16 页，共 128 页</StatusItem>
    <StatusItem $w={95}>6/18477 个字</StatusItem>
    <StatusItem $w={31}><BookIcon /></StatusItem>
    <StatusItem $w={122}>简体中文(中国大陆)</StatusItem>
    <StatusItem $w={72}>修订: 关闭</StatusItem>
    <StatusItem $w={21} $center><AccessIcon /></StatusItem>
    <StatusItem $w={1131} $bold>辅助功能: 调查</StatusItem>
    <ViewBtn $w={40}><ReadIcon /></ViewBtn>
    <ViewBtn $w={40} $on><PrintIcon /></ViewBtn>
    <ViewBtn $w={44}><WebIcon /></ViewBtn>
    <ZoomSign>−</ZoomSign>
    <Slider />
    <ZoomSign>+</ZoomSign>
    <StatusItem $w={44} $pad={11}>100%</StatusItem>
  </Status>
);

export default function App() {
  return (
    <>
      <Global />
      <Screen>
        <Desktop>
          <Strip />
          <Win>
            <TitleBar />
            <Ribbon>
              <ClipboardGroup />
              <FontGroup />
              <ParagraphGroup />
              <StylesGroup />
              <EditGroup />
              <AddinGroup />
              <SaveGroup />
              <Collapse><ChevronUp size={14} strokeWidth={1.2} /></Collapse>
            </Ribbon>
            <Warn>
              <InfoDot>i</InfoDot>
              <WarnTitle>获取正版 OFFICE</WarnTitle>
              <WarnText>你的许可证并非正版，你可能是盗版软件的受害者。立即通过正版 Office 避免中断并使文件保持安全。</WarnText>
              <WarnBtn $w={118}>获取正版 Office</WarnBtn>
              <WarnBtn $w={105}>了解详细信息</WarnBtn>
              <WarnClose><X size={14} strokeWidth={1.2} /></WarnClose>
            </Warn>
            <Main>
              <NavPane />
              <VRuler />
              <Doc>
                <Ruler />
                <DocPage />
                <NextPage>
                  <svg width="791" height="19" viewBox="0 0 791 19">
                    <path d="M0 0h12l10 19H0z" fill="#cfe2f7" />
                    <path d="M12 0h33l8 19H22z" fill="#a9c8ec" />
                    <path d="M761 0h30v19h-40z" fill="#e8f1fb" />
                  </svg>
                </NextPage>
              </Doc>
            </Main>
            <StatusBar />
          </Win>
        </Desktop>
        <Taskbar />
      </Screen>
    </>
  );
}
